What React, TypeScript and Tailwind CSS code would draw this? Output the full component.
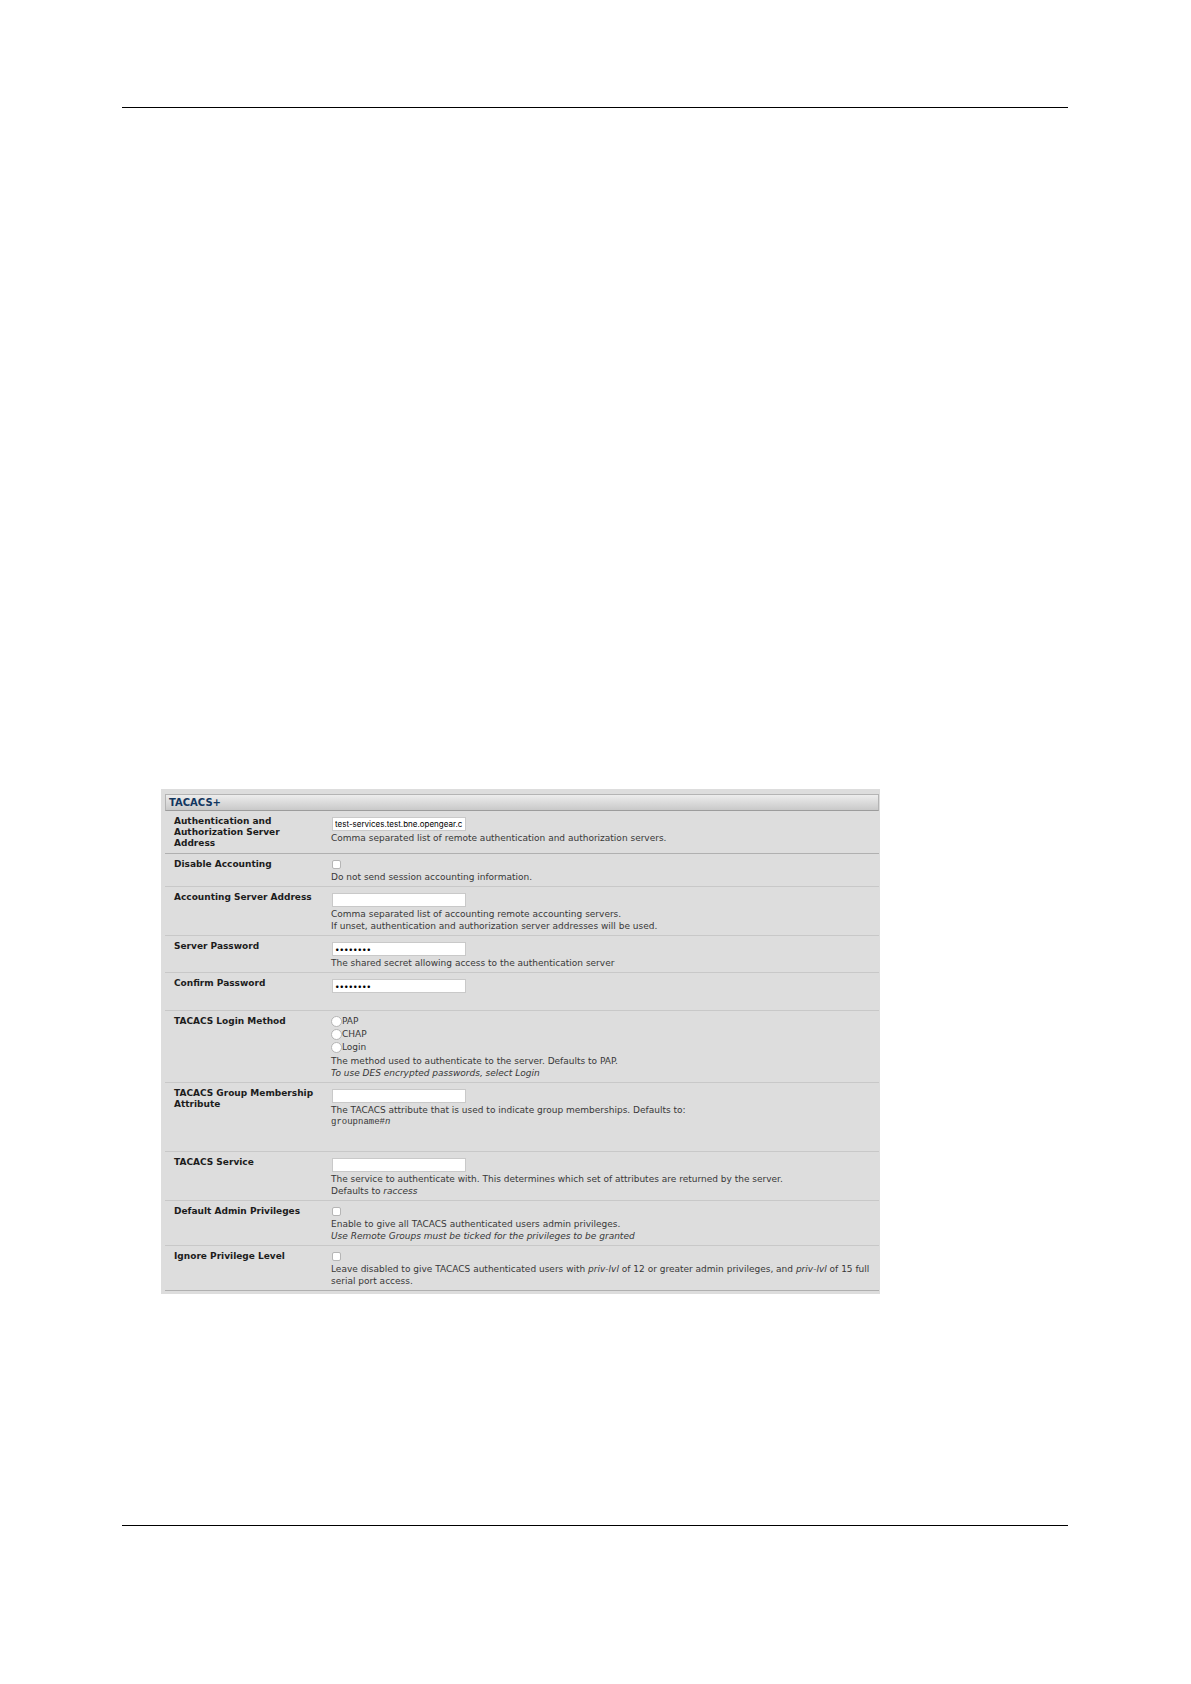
import React from "react";

const INPUT =
    "block h-[14px] w-[134px] max-w-full ml-px px-[2px] bg-white border border-[#c9c9c9] text-black font-['Inter',sans-serif] text-[8px] leading-[12px] outline-none";
const CHECKBOX =
    "block appearance-none size-[9px] ml-px bg-white border border-[#b5b5b5] rounded-[2px] checked:bg-[#3b78c4]";
const RADIO =
    "appearance-none size-[11px] bg-white border border-[#b5b5b5] rounded-full checked:bg-[#3b78c4]";

type RowProps = {
    label: string;
    id: string;
    group?: boolean;
    dark?: boolean;
    children: React.ReactNode;
};

const Row = ({ label, id, group, dark, children }: RowProps) => {
    const labelStyle = "block font-bold text-[#1c1c1c] leading-[11px]";
    return (
        <div
            className={`flex pl-[9px] border-b ${
                dark ? "border-[#b0b0b0]" : "border-[#c8c8c8]"
            }`}
        >
            <div className="w-[157px] shrink-0 pt-[5px] pb-1 pr-4">
                {group ? (
                    <span id={id} className={labelStyle}>
                        {label}
                    </span>
                ) : (
                    <label htmlFor={id} className={labelStyle}>
                        {label}
                    </label>
                )}
            </div>
            <div className={`flex-1 min-w-0 pb-[3px] ${group ? "pt-1" : "pt-[6px]"}`}>
                {children}
            </div>
        </div>
    );
};

const Note = ({ children }: { children: React.ReactNode }) => (
    <p className="mt-px leading-[12px]">{children}</p>
);

const CheckBox = ({ id }: { id: string }) => (
    <div className="h-[10px]">
        <input id={id} type="checkbox" className={CHECKBOX} />
    </div>
);

const App = () => {
    return (
        <div className="min-h-screen bg-white pl-[122px] pr-[123px] font-['Verdana','DejaVu_Sans',sans-serif]">
            <header className="h-[108px] border-b border-black"></header>
            <main className="pt-[681px] pb-[231px] pl-[39px]">
                <form className="w-full max-w-[719px] bg-[#dddddd] pt-[5px] pb-[3px] pl-1 pr-px text-[9px] text-[#383838]">
                    <h1 className="h-[17px] px-[3px] border border-[#b4b4b4] border-b-[#9c9c9c] bg-gradient-to-b from-[#ededed] to-[#c9c9c9] text-[10px] leading-[16px] font-bold text-[#12365f]">
                        TACACS+
                    </h1>
                    <Row
                        label="Authentication and Authorization Server Address"
                        id="auth-server"
                        dark
                    >
                        <input
                            id="auth-server"
                            type="text"
                            defaultValue="test-services.test.bne.opengear.c"
                            className={INPUT}
                        />
                        <Note>
                            Comma separated list of remote authentication and
                            authorization servers.
                        </Note>
                    </Row>
                    <Row label="Disable Accounting" id="disable-accounting">
                        <CheckBox id="disable-accounting" />
                        <Note>Do not send session accounting information.</Note>
                    </Row>
                    <Row label="Accounting Server Address" id="acct-server">
                        <input id="acct-server" type="text" className={INPUT} />
                        <Note>
                            Comma separated list of accounting remote accounting
                            servers.
                            <br />
                            If unset, authentication and authorization server
                            addresses will be used.
                        </Note>
                    </Row>
                    <Row label="Server Password" id="password">
                        <input
                            id="password"
                            type="password"
                            defaultValue="password"
                            className={INPUT}
                        />
                        <Note>
                            The shared secret allowing access to the
                            authentication server
                        </Note>
                    </Row>
                    <Row label="Confirm Password" id="confirm">
                        <input
                            id="confirm"
                            type="password"
                            defaultValue="password"
                            className={INPUT}
                        />
                        <div className="h-[14px]"></div>
                    </Row>
                    <Row label="TACACS Login Method" id="login-method" group>
                        <div role="radiogroup" aria-labelledby="login-method">
                            {["PAP", "CHAP", "Login"].map((method) => (
                                <label
                                    key={method}
                                    className="flex items-center h-[13px] w-fit"
                                >
                                    <input
                                        type="radio"
                                        name="method"
                                        value={method}
                                        className={RADIO}
                                    />
                                    {method}
                                </label>
                            ))}
                        </div>
                        <Note>
                            The method used to authenticate to the server.
                            Defaults to PAP.
                            <br />
                            <i>To use DES encrypted passwords, select Login</i>
                        </Note>
                    </Row>
                    <Row label="TACACS Group Membership Attribute" id="group-attr">
                        <input id="group-attr" type="text" className={INPUT} />
                        <Note>
                            The TACACS attribute that is used to indicate group
                            memberships. Defaults to:
                        </Note>
                        <p className="font-['Liberation_Mono',monospace] leading-[12px] pb-5">
                            groupname#<i>n</i>
                        </p>
                    </Row>
                    <Row label="TACACS Service" id="service">
                        <input id="service" type="text" className={INPUT} />
                        <Note>
                            The service to authenticate with. This determines
                            which set of attributes are returned by the server.
                            <br />
                            Defaults to <i>raccess</i>
                        </Note>
                    </Row>
                    <Row label="Default Admin Privileges" id="default-admin">
                        <CheckBox id="default-admin" />
                        <Note>
                            Enable to give all TACACS authenticated users admin
                            privileges.
                            <br />
                            <i>
                                Use Remote Groups must be ticked for the
                                privileges to be granted
                            </i>
                        </Note>
                    </Row>
                    <Row label="Ignore Privilege Level" id="ignore-level" dark>
                        <CheckBox id="ignore-level" />
                        <Note>
                            Leave disabled to give TACACS authenticated users
                            with <i>priv-lvl</i> of 12 or greater admin
                            privileges, and <i>priv-lvl</i> of 15 full serial
                            port access.
                        </Note>
                    </Row>
                </form>
            </main>
            <footer className="border-t border-black h-[159px]"></footer>
        </div>
    );
};

export default App;
